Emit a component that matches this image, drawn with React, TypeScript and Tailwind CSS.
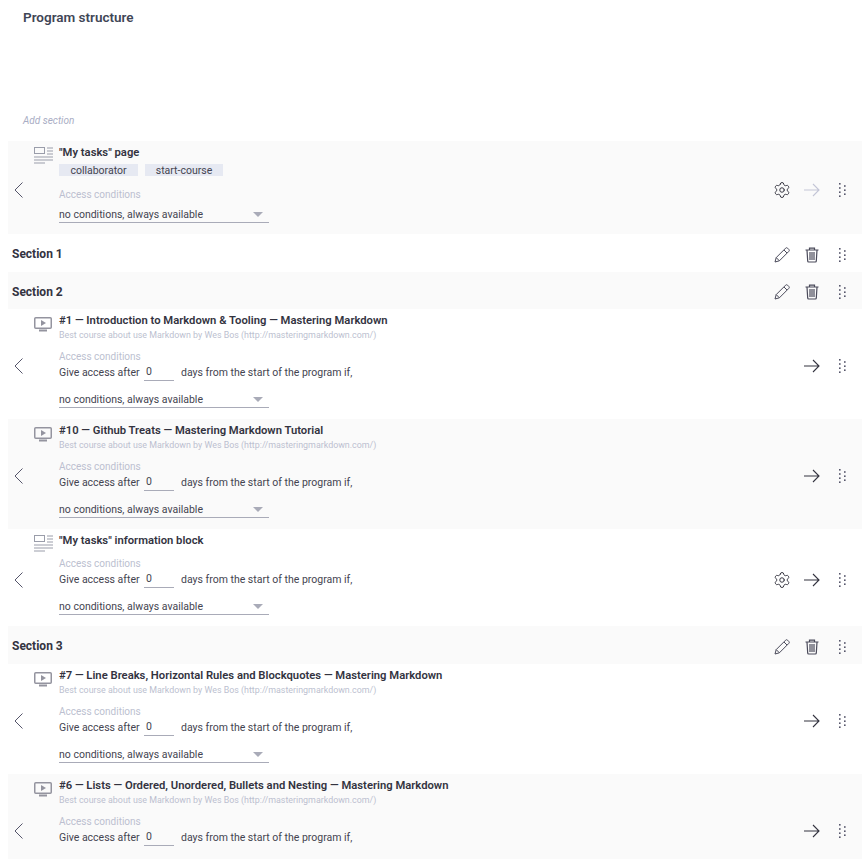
import { Settings } from "lucide-react"

const condition = "no conditions, always available"
const blurb = "Best course about use Markdown by Wes Bos (http://masteringmarkdown.com/)"

function Dots() {
  return (
    <svg width="7" height="14" viewBox="0 0 7 14" fill="#55556a">
      <rect x="0" y="0" width="1.6" height="1.6" />
      <rect x="0" y="4.2" width="1.6" height="1.6" />
      <rect x="0" y="8.4" width="1.6" height="1.6" />
      <rect x="0" y="12.4" width="1.6" height="1.6" />
      <rect x="5" y="2.2" width="1.6" height="1.6" />
      <rect x="5" y="6.4" width="1.6" height="1.6" />
      <rect x="5" y="10.4" width="1.6" height="1.6" />
    </svg>
  )
}

function Trash() {
  return (
    <svg width="14" height="16" viewBox="0 0 14 16" fill="none" stroke="#4a4a5a" strokeWidth="1.2">
      <path d="M0.5 3h13M4.5 3V1.2h5V3" />
      <path d="M2 3l.7 11a1 1 0 0 0 1 1h6.6a1 1 0 0 0 1-1L12 3" />
      <path d="M5 5v8M7 5v8M9 5v8" />
    </svg>
  )
}

function PencilIcon() {
  return (
    <svg width="16" height="16" viewBox="0 0 16 16" fill="none" stroke="#4a4a5a" strokeWidth="1" strokeLinejoin="round">
      <path d="M1 15l1.2-4.4L11.6 1.2a1.4 1.4 0 0 1 2 0l1.2 1.2a1.4 1.4 0 0 1 0 2L5.4 13.8z" />
      <path d="M10 3l3 3M2.2 10.6l3.2 3.2" />
    </svg>
  )
}

function Chevron() {
  return (
    <svg width="9" height="16" viewBox="0 0 9 16" fill="none" stroke="#55556a" strokeWidth="1">
      <path d="M8.5 0.5L1 8l7.5 7.5" />
    </svg>
  )
}

function Arrow({ muted }: { muted?: boolean }) {
  return (
    <svg width="16" height="14" viewBox="0 0 16 14" fill="none" stroke={muted ? "#c3c5d6" : "#33333f"} strokeWidth="1.1">
      <path d="M0 7h15M9 1l6 6-6 6" />
    </svg>
  )
}

function PageIcon() {
  return (
    <svg width="19" height="18" viewBox="0 0 19 18" fill="none" stroke="#9a9daa" strokeWidth="1">
      <rect x="0.5" y="0.5" width="10" height="6" />
      <path d="M13 1h6M13 4h6M13 7h6M0 10h19M0 13h19M0 16h11" />
    </svg>
  )
}

function VideoIcon() {
  return (
    <svg width="18" height="15" viewBox="0 0 18 15" fill="none">
      <rect x="0.75" y="0.75" width="16.5" height="10.5" rx="1" stroke="#94949f" strokeWidth="1.5" />
      <path d="M7 3l5 3-5 3z" fill="#94949f" />
      <path d="M5 13.5h8" stroke="#94949f" strokeWidth="2" />
    </svg>
  )
}

function Select() {
  return (
    <div className="flex h-[17px] w-[210px] items-start justify-between border-b border-[#a9abb8] pr-[6px] text-[10.5px] leading-[18px] text-[#444450]">
      <span>{condition}</span>
      <span className="mt-[6px] h-0 w-0 border-x-[5px] border-t-[5px] border-x-transparent border-t-[#a9abb8]" />
    </div>
  )
}

function Access({ days = true, top }: { days?: boolean; top: string }) {
  return (
    <div className={top}>
      <div className="text-[10px] leading-[16px] text-[#bcbfd0]">Access conditions</div>
      {days ? (
        <div className="mb-[10px] flex h-4 items-center text-[10.5px] text-[#444450]">
          <span className="w-[85px]">Give access after</span>
          <span className="h-4 w-[30px] border-b border-[#a9abb8] pl-[2px] leading-[14px]">0</span>
          <span className="ml-[7px]">days from the start of the program if,</span>
        </div>
      ) : (
        <div className="h-[3px]" />
      )}
      <Select />
    </div>
  )
}

function Actions({ gear, muted }: { gear?: boolean; muted?: boolean }) {
  return (
    <div className="flex items-center pr-[16px] pt-1">
      {gear && <Settings size={18} strokeWidth={1.3} className="mr-[13px] text-[#33333f]" />}
      <Arrow muted={muted} />
      <div className="ml-[19px]">
        <Dots />
      </div>
    </div>
  )
}

function Item({
  title,
  sub,
  icon,
  gear,
  shaded,
}: {
  title: string
  sub?: boolean
  icon: "page" | "video"
  gear?: boolean
  shaded?: boolean
}) {
  return (
    <div className={`flex items-center ${shaded ? "bg-[#fafafa]" : ""}`}>
      <div className="w-[26px] shrink-0 pl-[6px] pt-1">
        <Chevron />
      </div>
      <div className={`w-[25px] shrink-0 self-start ${icon === "page" ? "pt-[6px]" : "pt-[8px]"}`}>
        {icon === "page" ? <PageIcon /> : <VideoIcon />}
      </div>
      <div className="flex-1 pb-[11px] pt-[4px]">
        <div className="h-4 text-[11.25px] font-semibold leading-[15px] text-[#33333f]">{title}</div>
        {sub && <div className="h-[14px] text-[8.9px] leading-[13px] text-[#bcbfd0]">{blurb}</div>}
        <Access top={sub ? "mt-[6px]" : "mt-[7px]"} />
      </div>
      <Actions gear={gear} />
    </div>
  )
}

function Section({ name, shaded, short }: { name: string; shaded?: boolean; short?: boolean }) {
  return (
    <div
      className={`flex items-center justify-between pl-[4px] pr-[16px] ${short ? "h-[37px]" : "h-[38px]"} ${
        shaded ? "bg-[#fafafa]" : ""
      }`}
    >
      <span className="pt-[2px] text-[12px] font-bold text-[#33333f]">{name}</span>
      <div className="flex items-center pt-[3px]">
        <PencilIcon />
        <span className="ml-[15px]">
          <Trash />
        </span>
        <span className="ml-[20px]">
          <Dots />
        </span>
      </div>
    </div>
  )
}

export default function App() {
  return (
    <div className="h-[859px] overflow-hidden bg-white pl-[8px] pr-[3px] font-['Roboto',sans-serif]">
      <h1 className="pl-[15px] pt-[7px] text-[13.5px] font-semibold leading-[20px] text-[#3f4656]">
        Program structure
      </h1>
      <div className="mt-[86px] h-[28px] pl-[15px] text-[10px] italic leading-[16px] text-[#a9adc4]">Add section</div>

      <div className="flex h-[93px] items-center bg-[#fafafa]">
        <div className="w-[26px] shrink-0 pl-[6px] pt-1">
          <Chevron />
        </div>
        <div className="w-[25px] shrink-0 self-start pt-[6px]">
          <PageIcon />
        </div>
        <div className="flex-1 self-start pt-[4px]">
          <div className="h-4 text-[11.25px] font-semibold leading-[15px] text-[#33333f]">"My tasks" page</div>
          <div className="mt-[3px] flex h-3 text-center text-[10.5px] leading-[14px] text-[#444450]">
            <span className="w-[79px] bg-[#e6e9f2]">collaborator</span>
            <span className="ml-[7px] w-[78px] bg-[#e6e9f2]">start-course</span>
          </div>
          <Access days={false} top="mt-[11px]" />
        </div>
        <Actions gear muted />
      </div>

      <Section name="Section 1" />
      <Section name="Section 2" shaded short />
      <Item icon="video" sub title="#1 — Introduction to Markdown & Tooling — Mastering Markdown" />
      <Item icon="video" sub shaded title="#10 — Github Treats — Mastering Markdown Tutorial" />
      <Item icon="page" gear title={'"My tasks" information block'} />
      <Section name="Section 3" shaded />
      <Item icon="video" sub title="#7 — Line Breaks, Horizontal Rules and Blockquotes — Mastering Markdown" />
      <Item icon="video" sub shaded title="#6 — Lists — Ordered, Unordered, Bullets and Nesting — Mastering Markdown" />
    </div>
  )
}
